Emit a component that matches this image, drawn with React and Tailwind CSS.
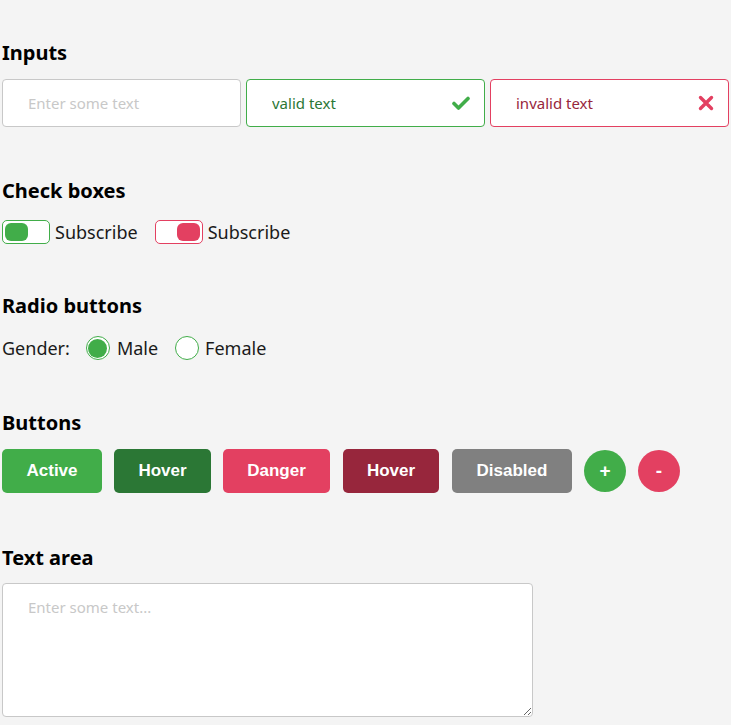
import React from 'react';

const Heading = ({ children, className = '' }) => (
  <h2 className={`pt-[2px] text-[20px] leading-[26px] font-bold text-black ${className}`}>{children}</h2>
);

const CheckIcon = () => (
  <svg width="18" height="14" viewBox="0 0 18 14" className="shrink-0">
    <path d="M2 7.5 L6.5 12 L16 2.5" fill="none" stroke="#41ad49" strokeWidth="3.6" strokeLinecap="round" strokeLinejoin="round" />
  </svg>
);

const CrossIcon = () => (
  <svg width="16" height="16" viewBox="0 0 16 16" className="shrink-0">
    <path d="M2.5 2.5 L13.5 13.5 M13.5 2.5 L2.5 13.5" fill="none" stroke="#e34061" strokeWidth="3.4" strokeLinecap="round" />
  </svg>
);

const Toggle = ({ on, color }) => (
  <span className={`flex w-[48px] h-[24px] rounded-[5px] border bg-white p-[2px] ${on ? 'justify-start' : 'justify-end'} ${color === 'green' ? 'border-[#41ad49]' : 'border-[#e34061]'}`}>
    <span className={`w-[23px] h-full rounded-[6px] ${color === 'green' ? 'bg-[#41ad49]' : 'bg-[#e34061]'}`} />
  </span>
);

const Radio = ({ checked }) => (
  <span className="flex items-center justify-center w-[24px] h-[24px] rounded-full border border-[#41ad49] bg-white">
    {checked && <span className="w-[19px] h-[19px] rounded-full bg-[#41ad49]" />}
  </span>
);

export default function App() {
  const btns = [
    { label: 'Active', cls: 'bg-[#41ad49] w-[100px]' },
    { label: 'Hover', cls: 'bg-[#2b7735] w-[97px] ml-[12px]' },
    { label: 'Danger', cls: 'bg-[#e34061] w-[107px] ml-[12px]' },
    { label: 'Hover', cls: 'bg-[#97263c] w-[96px] ml-[13px]' },
    { label: 'Disabled', cls: 'bg-[#808080] w-[120px] ml-[13px]' },
  ];

  return (
    <div className="min-h-[725px] bg-[#f4f4f4] px-[2px] pt-[38px] font-['Noto_Sans','Open_Sans',sans-serif] text-[#1a1a1a]">
      <section>
        <Heading>Inputs</Heading>
        <div className="mt-[13px] grid grid-cols-3 gap-[5px]">
          <input
            placeholder="Enter some text"
            className="h-[48px] w-full rounded-[4px] border border-[#c8c8c8] bg-white pl-[25px] text-[15px] outline-none placeholder:text-[#c8c8c8]"
          />
          <div className="flex h-[48px] items-center rounded-[4px] border border-[#41ad49] bg-white pl-[25px] pr-[14px]">
            <input readOnly defaultValue="valid text" className="min-w-0 flex-1 bg-transparent text-[15px] text-[#2b7735] outline-none" />
            <CheckIcon />
          </div>
          <div className="flex h-[48px] items-center rounded-[4px] border border-[#e34061] bg-white pl-[25px] pr-[14px]">
            <input readOnly defaultValue="invalid text" className="min-w-0 flex-1 bg-transparent text-[15px] text-[#97263c] outline-none" />
            <CrossIcon />
          </div>
        </div>
      </section>

      <section className="mt-[49px]">
        <Heading>Check boxes</Heading>
        <div className="mt-[16px] flex items-center text-[18px] leading-[24px]">
          <Toggle on color="green" />
          <span className="ml-[5px]">Subscribe</span>
          <span className="ml-[17px]"><Toggle color="red" /></span>
          <span className="ml-[5px]">Subscribe</span>
        </div>
      </section>

      <section className="mt-[47px]">
        <Heading>Radio buttons</Heading>
        <div className="mt-[17px] flex items-center text-[18px] leading-[24px]">
          <span>Gender:</span>
          <span className="ml-[16px]"><Radio checked /></span>
          <span className="ml-[7px]">Male</span>
          <span className="ml-[17px]"><Radio /></span>
          <span className="ml-[6px]">Female</span>
        </div>
      </section>

      <section className="mt-[48px]">
        <Heading>Buttons</Heading>
        <div className="mt-[13px] flex items-center font-['Liberation_Sans',Arial,sans-serif] text-[17px] font-bold text-white">
          {btns.map((b, i) => (
            <button key={i} className={`h-[44px] rounded-[5px] ${b.cls}`}>{b.label}</button>
          ))}
          <button className="ml-[12px] h-[42px] w-[42px] rounded-full bg-[#41ad49] text-[19px]">+</button>
          <button className="ml-[12px] h-[42px] w-[42px] rounded-full bg-[#e34061] text-[19px]">-</button>
        </div>
      </section>

      <section className="mt-[50px]">
        <Heading>Text area</Heading>
        <textarea
          placeholder="Enter some text..."
          className="mt-[12px] block h-[134px] w-[531px] rounded-[4px] border border-[#c8c8c8] bg-white px-[25px] pt-[12px] text-[15px] outline-none placeholder:text-[#c8c8c8]"
        />
      </section>
    </div>
  );
}
